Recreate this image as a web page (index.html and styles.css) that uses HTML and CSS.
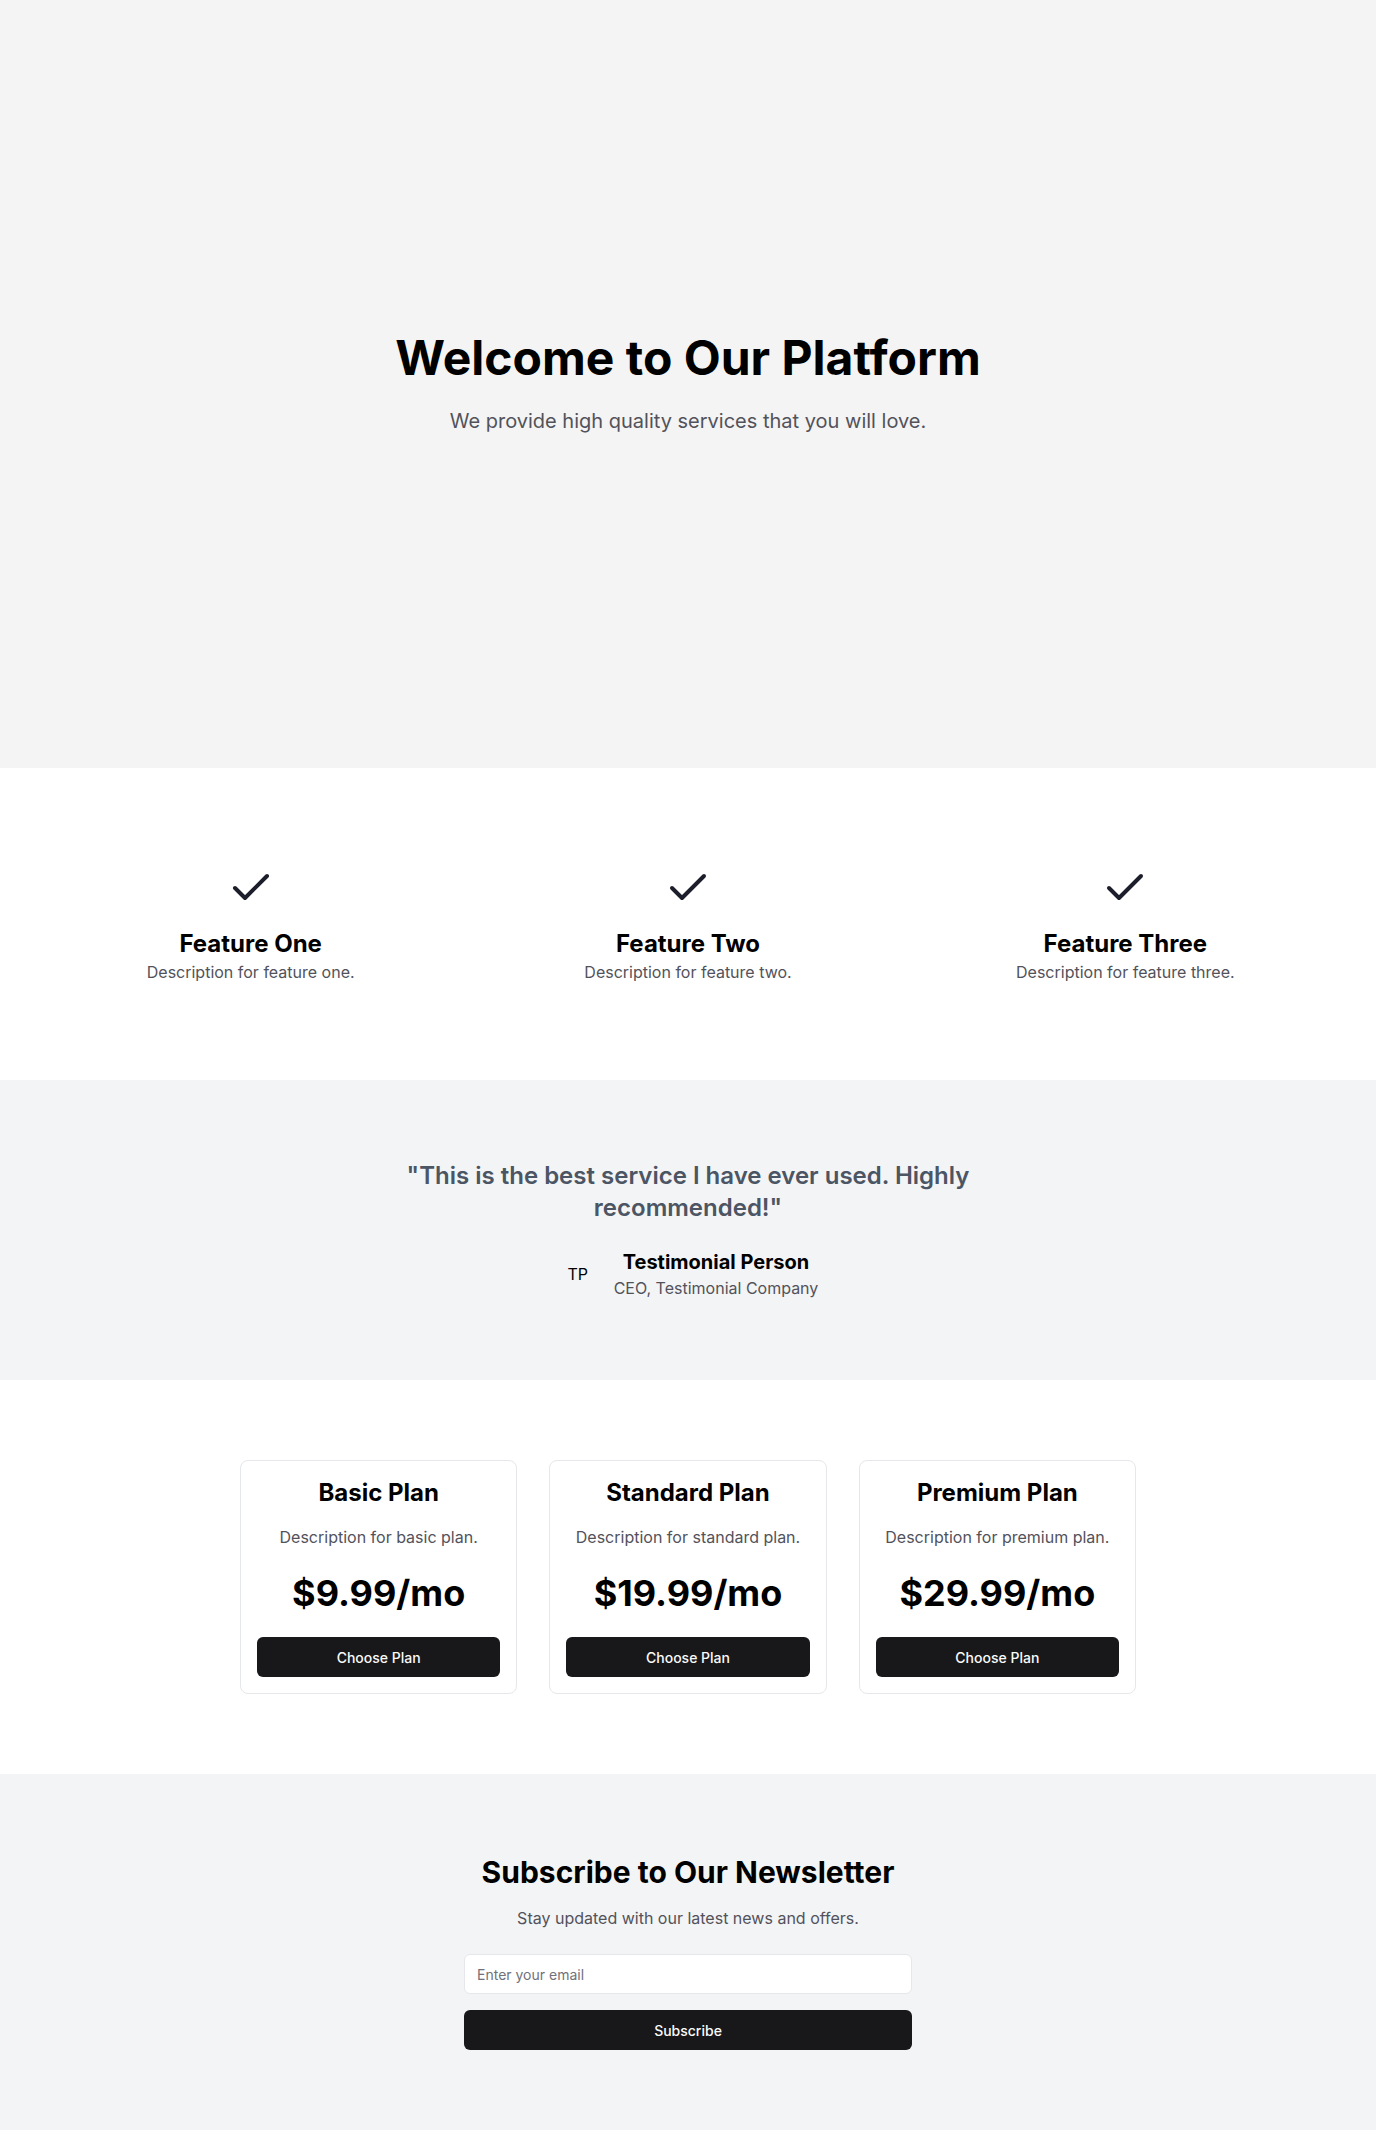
FILE: index.html
```html
<!DOCTYPE html>
<html lang="en">
<head>
<meta charset="utf-8">
<title>Welcome to Our Platform</title>
<link rel="stylesheet" href="styles.css">
</head>
<body>
<section class="hero">
  <div class="hero-inner">
    <h1 class="hero-title">Welcome to Our Platform</h1>
    <p class="hero-sub">We provide high quality services that you will love.</p>
  </div>
</section>

<section class="features">
  <div class="feature">
    <svg class="check" viewBox="0 0 24 24" fill="none" stroke="currentColor" stroke-width="2" stroke-linecap="round" stroke-linejoin="round"><path d="M20 6 9 17l-5-5"/></svg>
    <h3 class="feature-title">Feature One</h3>
    <p class="feature-desc">Description for feature one.</p>
  </div>
  <div class="feature">
    <svg class="check" viewBox="0 0 24 24" fill="none" stroke="currentColor" stroke-width="2" stroke-linecap="round" stroke-linejoin="round"><path d="M20 6 9 17l-5-5"/></svg>
    <h3 class="feature-title">Feature Two</h3>
    <p class="feature-desc">Description for feature two.</p>
  </div>
  <div class="feature">
    <svg class="check" viewBox="0 0 24 24" fill="none" stroke="currentColor" stroke-width="2" stroke-linecap="round" stroke-linejoin="round"><path d="M20 6 9 17l-5-5"/></svg>
    <h3 class="feature-title">Feature Three</h3>
    <p class="feature-desc">Description for feature three.</p>
  </div>
</section>

<section class="testimonial">
  <blockquote class="quote">"This is the best service I have ever used. Highly recommended!"</blockquote>
  <div class="author">
    <span class="avatar">TP</span>
    <div class="author-text">
      <div class="author-name">Testimonial Person</div>
      <div class="author-role">CEO, Testimonial Company</div>
    </div>
  </div>
</section>

<section class="pricing">
  <div class="plans">
    <div class="plan">
      <h3 class="plan-title">Basic Plan</h3>
      <p class="plan-desc">Description for basic plan.</p>
      <div class="plan-price">$9.99/mo</div>
      <button class="btn">Choose Plan</button>
    </div>
    <div class="plan">
      <h3 class="plan-title">Standard Plan</h3>
      <p class="plan-desc">Description for standard plan.</p>
      <div class="plan-price">$19.99/mo</div>
      <button class="btn">Choose Plan</button>
    </div>
    <div class="plan">
      <h3 class="plan-title">Premium Plan</h3>
      <p class="plan-desc">Description for premium plan.</p>
      <div class="plan-price">$29.99/mo</div>
      <button class="btn">Choose Plan</button>
    </div>
  </div>
</section>

<section class="newsletter">
  <h2 class="nl-title">Subscribe to Our Newsletter</h2>
  <p class="nl-sub">Stay updated with our latest news and offers.</p>
  <form class="nl-form">
    <input class="nl-input" type="email" placeholder="Enter your email">
    <button class="btn" type="button">Subscribe</button>
  </form>
</section>
</body>
</html>
```
FILE: styles.css
```css
* { box-sizing: border-box; }
html, body { margin: 0; padding: 0; }
body {
  font-family: Inter, "Noto Sans", "Liberation Sans", sans-serif;
  color: #09090b;
  background: #ffffff;
}
h1, h2, h3, p, blockquote { margin: 0; }

.hero {
  background: #f4f4f4;
  height: 768px;
  display: flex;
  align-items: center;
  justify-content: center;
  text-align: center;
}
.hero-title {
  font-size: 48px;
  line-height: 48px;
  font-weight: 700;
  color: #000;
}
.hero-sub {
  margin-top: 25px;
  font-size: 20px;
  line-height: 28px;
  color: #52525b;
}

.features {
  padding: 96px 32px;
  display: grid;
  grid-template-columns: repeat(3, 1fr);
  background: #fff;
}
.feature {
  display: flex;
  flex-direction: column;
  align-items: center;
  text-align: center;
}
.check {
  width: 48px;
  height: 48px;
  color: #1c1f2b;
  margin-bottom: 16px;
}
.feature-title {
  font-size: 24px;
  line-height: 32px;
  font-weight: 700;
  color: #000;
}
.feature-desc {
  font-size: 16px;
  line-height: 24px;
  color: #52525b;
}

.testimonial {
  background: #f3f4f6;
  padding: 80px 32px;
  display: flex;
  flex-direction: column;
  align-items: center;
}
.quote {
  max-width: 640px;
  text-align: center;
  font-size: 24px;
  line-height: 32px;
  font-weight: 600;
  color: #4b5563;
}
.author {
  margin-top: 24px;
  display: flex;
  align-items: center;
  gap: 16px;
}
.avatar {
  width: 40px;
  height: 40px;
  border-radius: 50%;
  display: flex;
  align-items: center;
  justify-content: center;
  font-size: 16px;
  color: #000;
  background: #f3f4f6;
}
.author-text { text-align: center; }
.author-name {
  font-size: 20px;
  line-height: 28px;
  font-weight: 700;
  color: #000;
}
.author-role {
  font-size: 16px;
  line-height: 24px;
  color: #52525b;
}

.pricing {
  background: #fff;
  padding: 80px 32px;
}
.plans {
  max-width: 896px;
  margin: 0 auto;
  display: grid;
  grid-template-columns: repeat(3, 1fr);
  gap: 32px;
}
.plan {
  border: 1px solid #e5e7eb;
  border-radius: 8px;
  padding: 16px;
  display: flex;
  flex-direction: column;
  align-items: center;
  text-align: center;
  background: #fff;
}
.plan-title {
  font-size: 24px;
  line-height: 32px;
  font-weight: 700;
  color: #000;
}
.plan-desc {
  margin-top: 16px;
  font-size: 16px;
  line-height: 24px;
  color: #52525b;
}
.plan-price {
  margin-top: 24px;
  font-size: 36px;
  line-height: 40px;
  font-weight: 700;
  color: #000;
}
.btn {
  margin-top: 24px;
  width: 100%;
  height: 40px;
  border: none;
  border-radius: 6px;
  background: #18181b;
  color: #fafafa;
  font-family: inherit;
  font-size: 14px;
  font-weight: 500;
  cursor: pointer;
}

.newsletter {
  background: #f3f4f6;
  padding: 80px 32px;
  display: flex;
  flex-direction: column;
  align-items: center;
  text-align: center;
}
.nl-title {
  font-size: 30px;
  line-height: 36px;
  font-weight: 700;
  color: #000;
}
.nl-sub {
  margin-top: 16px;
  font-size: 16px;
  line-height: 24px;
  color: #52525b;
}
.nl-form {
  margin-top: 24px;
  width: 448px;
  display: flex;
  flex-direction: column;
  gap: 16px;
}
.nl-input {
  height: 40px;
  border: 1px solid #e5e7eb;
  border-radius: 6px;
  background: #fff;
  padding: 0 12px;
  font-family: inherit;
  font-size: 14px;
  color: #09090b;
  outline: none;
}
.nl-input::placeholder { color: #71717a; }
.nl-form .btn { margin-top: 0; }
```
